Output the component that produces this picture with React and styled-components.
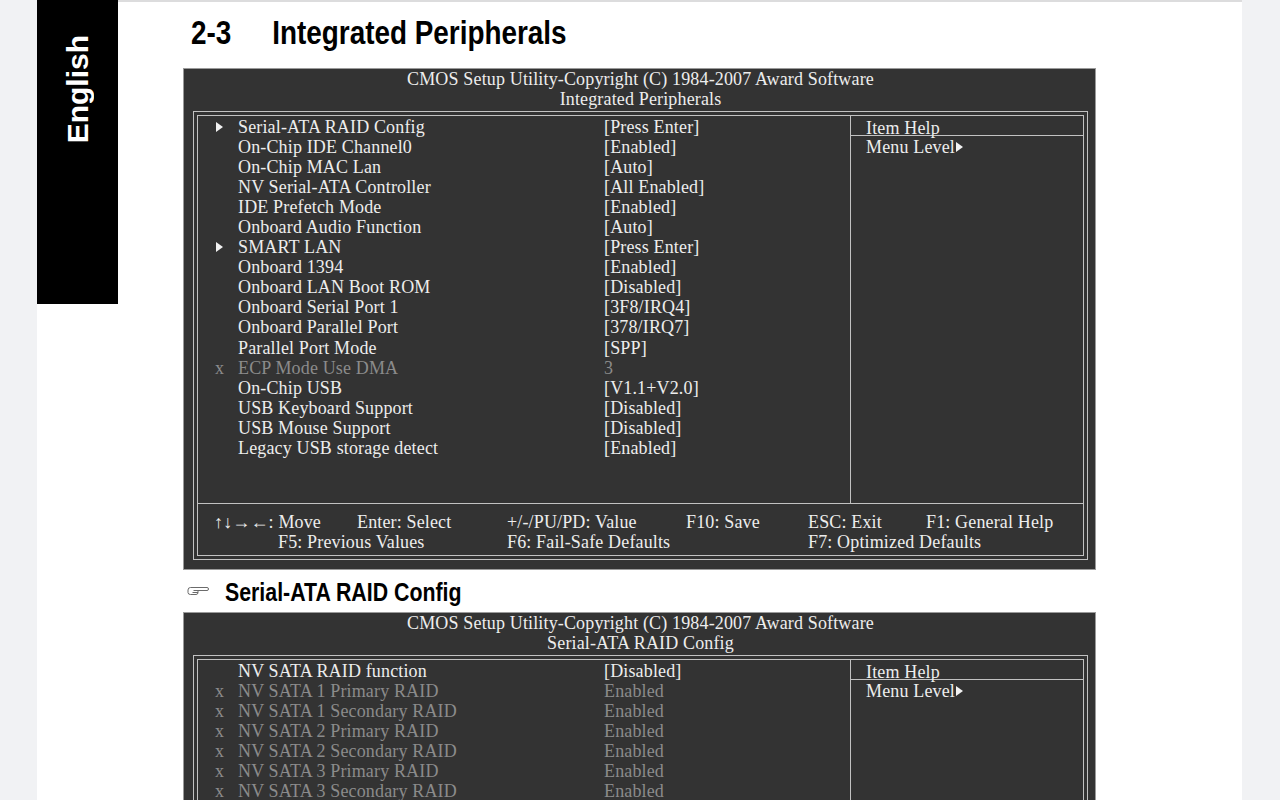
import React from "react";
import styled, { createGlobalStyle } from "styled-components";

const GlobalStyle = createGlobalStyle`
  html, body {
    margin: 0;
    padding: 0;
    height: 800px;
    overflow: hidden;
    background: #f1f2f4;
  }
  #root { height: 100%; }
`;

const Viewer = styled.div`
  display: flex;
  height: 800px;
  padding-left: 37px;
`;

const Sheet = styled.div`
  width: 1205px;
  flex: none;
  background: #fff;
  display: flex;
  align-items: flex-start;
  box-shadow: inset 0 2px 0 #dcdcdd;
`;

const LangTab = styled.div`
  width: 81px;
  height: 304px;
  flex: none;
  background: #000;
  display: flex;
  justify-content: center;
  align-items: flex-start;
`;

const LangLabel = styled.span`
  writing-mode: vertical-rl;
  transform: rotate(180deg);
  margin-top: 35px;
  font: 700 30px/30px "Liberation Sans", Arial, sans-serif;
  color: #fff;
`;

const Column = styled.div`
  width: 913px;
  margin-left: 65px;
  padding-top: 12px;
  display: flex;
  flex-direction: column;
`;

/* condensed bold heading face: Arial-metric sans squeezed horizontally */
const PageTitle = styled.h1`
  margin: 0 0 16px 8px;
  display: flex;
  font: 700 34px/40px "Liberation Sans", Arial, sans-serif;
  color: #000;
  white-space: nowrap;
  transform: scaleX(0.82);
  transform-origin: left center;
`;

const TitleNumber = styled.span`
  width: 99px;
  flex: none;
`;

const SectionHeading = styled.h2`
  margin: 7px 0 5px 4px;
  display: flex;
  align-items: center;
  gap: 16px;
  font: 700 26px/30px "Liberation Sans", Arial, sans-serif;
  color: #000;
  white-space: nowrap;
`;

const SectionText = styled.span`
  display: inline-block;
  transform: scaleX(0.82);
  transform-origin: left center;
`;

const HandIcon = styled.svg`
  width: 22px;
  height: 10px;
  flex: none;
  margin-top: -3px;
`;

const Screen = styled.div`
  background: #333;
  border: 1px solid #9a9a9a;
  padding: 0 7px 9px 9px;
  font-family: "Liberation Serif", "Times New Roman", serif;
  font-size: 18px;
  line-height: 20px;
  letter-spacing: 0.15px;
  color: #ededed;
`;

const ScreenTitle = styled.div`
  text-align: center;
  margin-bottom: 2px;
`;

const Frame = styled.div`
  border: 1px solid #c2c2c2;
  padding: 3px;
`;

const FrameInner = styled.div`
  border: 1px solid #c2c2c2;
  display: grid;
  grid-template-columns: 652px 1fr;
  grid-template-rows: 387px auto;
`;

const ItemList = styled.div`
  padding-top: 1px;
`;

const ItemRow = styled.div`
  display: grid;
  grid-template-columns: 40px 366px 1fr;
  height: 20.06px;
  color: ${(p) => (p.$muted ? "#8b8b8b" : "#ededed")};
`;

const Marker = styled.span`
  padding-left: 17px;
  display: flex;
  align-items: center;
`;

const Pointer = styled.span`
  display: inline-block;
  width: 0;
  height: 0;
  border-left: 7px solid #f2f2f2;
  border-top: 5px solid transparent;
  border-bottom: 5px solid transparent;
  margin-left: 1px;
`;

const HelpPane = styled.div`
  border-left: 1px solid #c2c2c2;
`;

const HelpHeader = styled.div`
  padding: 3px 0 0 15px;
  height: 16px;
  line-height: 18px;
  border-bottom: 1px solid #c2c2c2;
`;

const HelpBody = styled.div`
  padding: 1px 0 0 15px;
  display: flex;
  align-items: center;
  height: 20px;
`;

const KeyBar = styled.div`
  grid-column: 1 / -1;
  border-top: 1px solid #c2c2c2;
  padding: 8px 0 3px 16px;
  display: grid;
  grid-template-columns: 143px 150px 179px 122px 118px auto;
  grid-auto-rows: 20px;
`;

const KeyHint = styled.span`
  grid-column: ${(p) => p.$col} / span ${(p) => p.$span || 1};
  padding-left: ${(p) => p.$indent || 0}px;
  white-space: nowrap;
`;

const peripherals = [
  { label: "Serial-ATA RAID Config", value: "[Press Enter]", sub: true },
  { label: "On-Chip IDE Channel0", value: "[Enabled]" },
  { label: "On-Chip MAC Lan", value: "[Auto]" },
  { label: "NV Serial-ATA Controller", value: "[All Enabled]" },
  { label: "IDE Prefetch Mode", value: "[Enabled]" },
  { label: "Onboard Audio Function", value: "[Auto]" },
  { label: "SMART LAN", value: "[Press Enter]", sub: true },
  { label: "Onboard 1394", value: "[Enabled]" },
  { label: "Onboard LAN Boot ROM", value: "[Disabled]" },
  { label: "Onboard Serial Port 1", value: "[3F8/IRQ4]" },
  { label: "Onboard Parallel Port", value: "[378/IRQ7]" },
  { label: "Parallel Port Mode", value: "[SPP]" },
  { label: "ECP Mode Use DMA", value: "3", locked: true },
  { label: "On-Chip USB", value: "[V1.1+V2.0]" },
  { label: "USB Keyboard Support", value: "[Disabled]" },
  { label: "USB Mouse Support", value: "[Disabled]" },
  { label: "Legacy USB storage detect", value: "[Enabled]" },
];

const raidConfig = [
  { label: "NV SATA RAID function", value: "[Disabled]" },
  { label: "NV SATA 1 Primary RAID", value: "Enabled", locked: true },
  { label: "NV SATA 1 Secondary RAID", value: "Enabled", locked: true },
  { label: "NV SATA 2 Primary RAID", value: "Enabled", locked: true },
  { label: "NV SATA 2 Secondary RAID", value: "Enabled", locked: true },
  { label: "NV SATA 3 Primary RAID", value: "Enabled", locked: true },
  { label: "NV SATA 3 Secondary RAID", value: "Enabled", locked: true },
];

function BiosScreen({ title, items }) {
  return (
    <Screen>
      <ScreenTitle>
        CMOS Setup Utility-Copyright (C) 1984-2007 Award Software
        <br />
        {title}
      </ScreenTitle>
      <Frame>
        <FrameInner>
          <ItemList>
            {items.map((it) => (
              <ItemRow key={it.label} $muted={it.locked}>
                <Marker>{it.sub ? <Pointer /> : it.locked ? "x" : ""}</Marker>
                <span>{it.label}</span>
                <span>{it.value}</span>
              </ItemRow>
            ))}
          </ItemList>
          <HelpPane>
            <HelpHeader>Item Help</HelpHeader>
            <HelpBody>
              Menu Level
              <Pointer />
            </HelpBody>
          </HelpPane>
          <KeyBar>
            <KeyHint $col={1}>↑↓→←: Move</KeyHint>
            <KeyHint $col={2}>Enter: Select</KeyHint>
            <KeyHint $col={3}>+/-/PU/PD: Value</KeyHint>
            <KeyHint $col={4}>F10: Save</KeyHint>
            <KeyHint $col={5}>ESC: Exit</KeyHint>
            <KeyHint $col={6}>F1: General Help</KeyHint>
            <KeyHint $col={1} $span={2} $indent={64}>F5: Previous Values</KeyHint>
            <KeyHint $col={3} $span={2}>F6: Fail-Safe Defaults</KeyHint>
            <KeyHint $col={5} $span={2}>F7: Optimized Defaults</KeyHint>
          </KeyBar>
        </FrameInner>
      </Frame>
    </Screen>
  );
}

export default function App() {
  return (
    <>
      <GlobalStyle />
      <Viewer>
        <Sheet>
          <LangTab>
            <LangLabel>English</LangLabel>
          </LangTab>
          <Column>
            <PageTitle>
              <TitleNumber>2-3</TitleNumber>
              Integrated Peripherals
            </PageTitle>
            <BiosScreen title="Integrated Peripherals" items={peripherals} />
            <SectionHeading>
              <HandIcon viewBox="0 0 22 10" fill="none" stroke="#6b6b6b" strokeWidth="1">
                <path d="M1 4 Q1 1.5 3.5 1.5 L20 1.5 Q21.5 1.5 21.5 3 Q21.5 4.5 20 4.5 L11 4.5 L11 6.5 Q11 8.5 9 8.5 L3.5 8.5 Q1 8.5 1 6.5 Z" />
                <path d="M6.5 4.5 L11 4.5 M5.5 6.5 L11 6.5" />
              </HandIcon>
              <SectionText>Serial-ATA RAID Config</SectionText>
            </SectionHeading>
            <BiosScreen title="Serial-ATA RAID Config" items={raidConfig} />
          </Column>
        </Sheet>
      </Viewer>
    </>
  );
}
